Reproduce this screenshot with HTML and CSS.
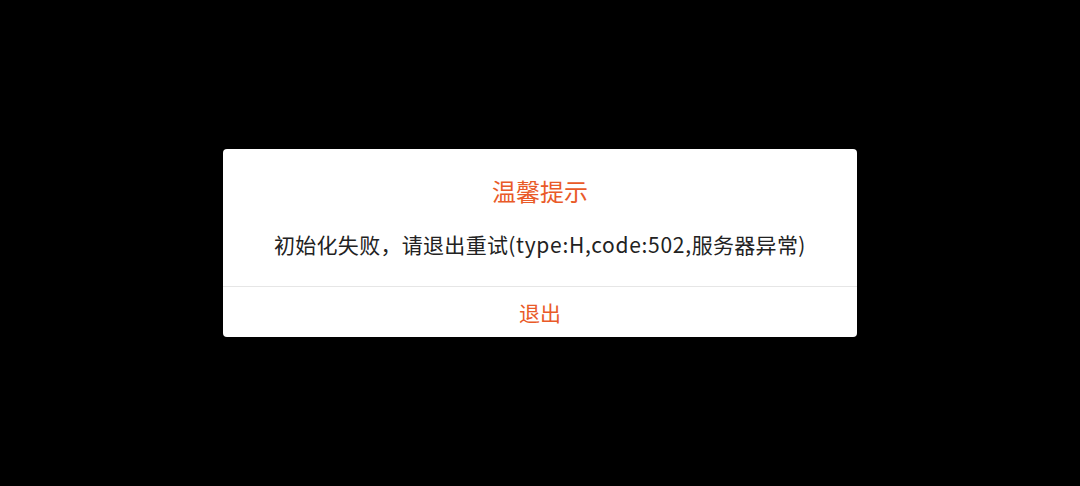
FILE: index.html
```html
<!DOCTYPE html>
<html lang="zh-CN">
<head>
<meta charset="utf-8">
<title>温馨提示</title>
<link rel="stylesheet" href="styles.css">
</head>
<body>
<div class="overlay">
  <div class="dialog">
    <div class="dialog-content">
      <div class="dialog-title">温馨提示</div>
      <div class="dialog-message">初始化失败，请退出重试<span class="latin">(type:H,code:502,</span>服务器异常<span class="latin">)</span></div>
    </div>
    <div class="dialog-actions">
      <div class="dialog-button">退出</div>
    </div>
  </div>
</div>
</body>
</html>
```
FILE: styles.css
```css
html, body {
  margin: 0;
  padding: 0;
  height: 100%;
  background: #000;
}
body {
  font-family: "Noto Sans CJK SC", "Noto Sans", sans-serif;
}
.overlay {
  height: 100%;
  display: flex;
  align-items: center;
  justify-content: center;
}
.dialog {
  width: 634px;
  background: #fff;
  border-radius: 4px;
  overflow: hidden;
}
.dialog-content {
  padding: 26px 20px 27px;
  display: flex;
  flex-direction: column;
  align-items: center;
  gap: 22px;
}
.dialog-title {
  font-size: 24px;
  line-height: 32px;
  color: #e95a28;
}
.dialog-message {
  font-size: 21px;
  line-height: 30px;
  color: #222;
  text-align: center;
  letter-spacing: 0.3px;
}
.latin {
  letter-spacing: 0.7px;
}
.dialog-actions {
  border-top: 1px solid #e6e6e6;
}
.dialog-button {
  height: 50px;
  line-height: 50px;
  text-align: center;
  font-size: 21px;
  color: #e95a28;
}
```
